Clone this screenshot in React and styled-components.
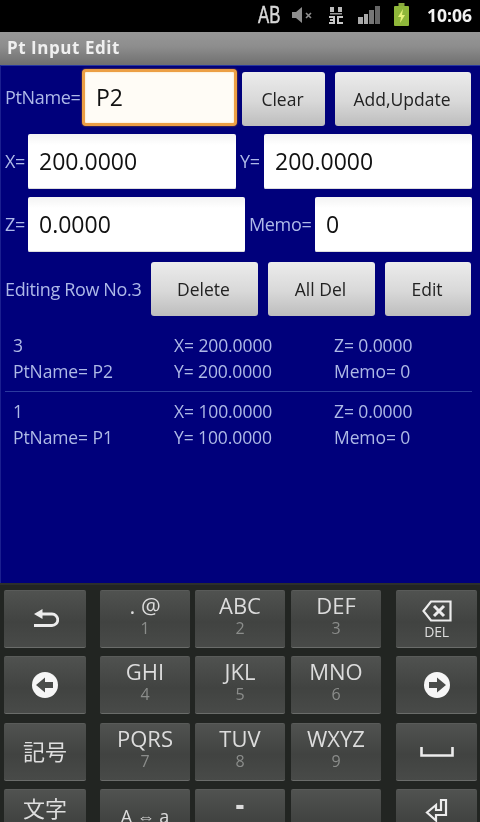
import React from "react";
import styled, { createGlobalStyle } from "styled-components";

const Global = createGlobalStyle`
  html, body { margin: 0; padding: 0; background: #000; }
  * { box-sizing: border-box; }
`;
const Screen = styled.div`
  width: 480px; height: 822px; overflow: hidden; display: flex; flex-direction: column;
  font-family: "Open Sans", "Noto Sans", sans-serif; background: #00007b; filter: blur(0.35px);
`;
const StatusBar = styled.div`
  height: 32px; flex: none; background: #000; display: flex; align-items: center; justify-content: flex-end;
  padding: 0 8px 2px 0;
`;
const StatusGroup = styled.div`
  display: flex; align-items: center; margin-right: ${p => p.$mr}px;
`;
const AB = styled.span`
  color: #d8d8d8; font: 400 24px "Liberation Sans", sans-serif; width: 22px; display: block;
  transform: scaleX(.7); transform-origin: left center; -webkit-text-stroke: .5px #d8d8d8;
`;
const Clock = styled.span`
  color: #f2f2f2; font: 700 17.500px "Open Sans", sans-serif;
`;
const TitleBar = styled.div`
  height: 33px; flex: none; padding: 5px 0 0 7px; color: #efefef; font-size: 17px; font-weight: 700; line-height: 22px;
  background: linear-gradient(#979797, #8d8d8d 45%, #6f6f6f); letter-spacing: .55px;
`;
const Body = styled.div`
  height: 518px; flex: none; background: #00007b; border-top: 1px solid #2636a0; border-left: 1px solid #1b1f8f;
  padding: 3px 8px 0 4px; display: flex; flex-direction: column;
`;
const FormRow = styled.div`
  display: flex; align-items: center; height: ${p => p.$h}px; margin-bottom: ${p => p.$mb || 0}px;
`;
const Label = styled.span`
  color: #aeb9e8; font-size: 18px; white-space: nowrap; width: ${p => p.$w}px; flex: none;
  letter-spacing: -.35px;
`;
const Field = styled.div`
  width: ${p => p.$w}px; height: ${p => p.$focus ? 57 : 55}px; flex: none; background: linear-gradient(#f3f3f3, #fff 20%); color: #111; font-size: 23px;
  display: flex; align-items: center; padding-left: 11px; border-radius: 2px; margin-right: ${p => p.$mr || 0}px;
  box-shadow: inset 0 -1px 0 #ddd;
  ${p => p.$focus && `border: 3px solid #ec9f45; box-shadow: 0 0 2px #a8651a, inset 0 0 2px #f8d9a8; border-radius: 4px; background:#fffcf6;`}
`;
const Btn = styled.div`
  width: ${p => p.$w}px; height: 54px; flex: none; margin-left: ${p => p.$ml || 0}px; margin-top: ${p => p.$mt || 0}px; color: #222; font-size: 17.500px;
  display: flex; align-items: center; justify-content: center; border-radius: 3px; padding-right: 2px;
  background: linear-gradient(#ececec, #d8d8d8 55%, #bdbdbd);
`;
const List = styled.div`
  margin: 16px -4px 0 -4px; display: flex; flex-direction: column;
`;
const ListRow = styled.div`
  display: grid; grid-template-columns: 161px 160px 1fr; padding: 0 0 0 12px; height: 67px;
  color: #aeb9e6; font-size: 17.500px; line-height: 25.500px; letter-spacing: -.1px;
  ${p => p.$line && `border-bottom: 1px solid #2c3a9e; height: 59px; margin-bottom: 7px; margin-left: 4px; padding-left: 8px; margin-right: 4px;`}
`;
const Cell = styled.div`white-space: nowrap;`;
const Keyboard = styled.div`
  flex: 1; border-top: 2px solid #2c2f2c; background: #222522;
  display: grid; grid-template-columns: 96px 95px 96px 105px 81px;
  grid-auto-rows: 58px; row-gap: 8.400px; padding: 5px 0 0 4px;
  & > :nth-child(5n+1) { margin-right: 14px; }
  & > :nth-child(5n+2) { margin-right: 5px; }
  & > :nth-child(5n+3) { margin-right: 6px; }
  & > :nth-child(5n+4) { margin-right: 15px; }
`;
const Key = styled.div`
  height: 58px; border-radius: 2px; background: linear-gradient(#505250, #414341 55%, #484a48);
  border-bottom: 1px solid #6a6c6a; border-top: 1px solid #595b59; color: #e2e2e2;
  display: flex; flex-direction: column; align-items: center; justify-content: ${p => p.$top ? "flex-start" : "center"};
  padding-top: ${p => p.$pt || 0}px;
`;
const KeyMain = styled.span`
  font-size: ${p => p.$s || 22}px; line-height: 25px; margin-top: ${p => p.$mt ?? 2}px; color: #dcdcdc;
  font-weight: ${p => p.$b ? 800 : 400};
`;
const KeySub = styled.span`font-size: 16px; line-height: 20px; color: #8b8d8b;`;
const CJK = styled.span`
  font: 22px/26px "Noto Sans CJK JP", sans-serif; color: #dedede; margin-top: ${p => p.$mt || 0}px;
`;
const Del = styled.span`font-size: 14px; line-height: 15px; color: #ddd; margin-top: 2px; letter-spacing: -.3px;`;

const Mute = () => (
  <svg width="22" height="20" viewBox="0 0 22 20">
    <path d="M1 7h4l6-5v16l-6-5H1z" fill="#8d8d8d" />
    <path d="M15 8l5 5M20 8l-5 5" stroke="#8d8d8d" strokeWidth="1.600" />
  </svg>
);
const Net = () => (
  <svg width="14" height="20" viewBox="0 0 14 20">
    <path d="M1 2h4v5H1zM9 2h4v5H9z" fill="#bbb" />
    <rect x="1" y="8" width="12" height="1.500" fill="#999" />
    <path d="M0 11h6v8H0v-2h4v-1H1v-2h3v-1H0zM8 11h6v2h-4v4h4v2H8z" fill="#c8c8c8" />
  </svg>
);
const Signal = () => (
  <svg width="22" height="20" viewBox="0 0 22 20">
    <rect x="0" y="12" width="5" height="7" fill="#aaa" />
    <rect x="6" y="9" width="4" height="10" fill="#aaa" />
    <rect x="11" y="5" width="5" height="14" fill="#777" />
    <rect x="17" y="1" width="5" height="18" fill="#666" />
  </svg>
);
const Battery = () => (
  <svg width="15" height="24" viewBox="0 0 15 24">
    <rect x="4.500" y="0" width="6" height="3" fill="#88a83c" />
    <rect x="0" y="3" width="15" height="20" rx="1" fill="#8fb73a" />
    <path d="M9 6L4 14h3l-1 6 5-8H8z" fill="#e6f27a" />
  </svg>
);
const BackIcon = () => (
  <svg width="28" height="22" viewBox="0 0 28 22">
    <path d="M11 6h10a5.500 5.500 0 0 1 0 11.500H3" fill="none" stroke="#ececec" strokeWidth="2.800" />
    <path d="M11.500 1L3 6l8.500 5z" fill="#ececec" />
  </svg>
);
const ArrowDisc = ({ right }) => (
  <svg width="28" height="28" viewBox="0 0 28 28">
    <circle cx="14" cy="14" r="13" fill="#f6f6f6" />
    <path d={right ? "M6 11h8V6.500L23 14l-9 7.500V17H6z" : "M22 11h-8V6.500L5 14l9 7.500V17h8z"} fill="#4a4c4a" />
  </svg>
);
const BackspaceIcon = () => (
  <svg width="30" height="22" viewBox="0 0 30 22">
    <path d="M9 1.500h19.500v19H9L1.500 11z" fill="none" stroke="#ececec" strokeWidth="2.200" />
    <path d="M12 6l10 10M22 6L12 16" stroke="#ececec" strokeWidth="3" />
  </svg>
);
const SpaceIcon = () => (
  <svg width="34" height="12" viewBox="0 0 34 12">
    <path d="M1.500 1v8.500h31V1" fill="none" stroke="#ececec" strokeWidth="2.600" />
  </svg>
);
const EnterIcon = () => (
  <svg width="24" height="26" viewBox="0 0 24 26">
    <path d="M16 2h5v15H11v5.500L2 14.500l9-7.500v5h5z" fill="none" stroke="#ececec" strokeWidth="2.200" />
  </svg>
);

const points = [
  { no: 3, name: "P2", x: "200.0000", y: "200.0000" },
  { no: 1, name: "P1", x: "100.0000", y: "100.0000" },
];
const letters = [
  ["back"], [". @", "1"], ["ABC", "2"], ["DEF", "3"], ["del"],
  ["left"], ["GHI", "4"], ["JKL", "5"], ["MNO", "6"], ["right"],
  ["kigo"], ["PQRS", "7"], ["TUV", "8"], ["WXYZ", "9"], ["space"],
  ["moji"], ["aa"], ["dash"], ["blank"], ["enter"],
];

const bottomRow = { moji: 4, aa: 0, dash: 0, blank: 0, enter: 8 };

const keyContent = ([m, s]) => {
  switch (m) {
    case "back": return <BackIcon />;
    case "del": return <><BackspaceIcon /><Del>DEL</Del></>;
    case "left": return <ArrowDisc />;
    case "right": return <ArrowDisc right />;
    case "kigo": return <CJK $mt={-3}>記号</CJK>;
    case "moji": return <CJK>文字</CJK>;
    case "space": return <SpaceIcon />;
    case "enter": return <EnterIcon />;
    case "aa": return <KeyMain $s={18} $mt={14}>A ⇔ a</KeyMain>;
    case "dash": return <KeyMain $s={26} $mt={2} $b>-</KeyMain>;
    case "blank": return null;
    default: return <><KeyMain>{m}</KeyMain><KeySub>{s}</KeySub></>;
  }
};

export default function App() {
  return (
    <Screen>
      <Global />
      <StatusBar>
        <StatusGroup $mr={11}><AB>AB</AB></StatusGroup>
        <StatusGroup $mr={16}><Mute /></StatusGroup>
        <StatusGroup $mr={15}><Net /></StatusGroup>
        <StatusGroup $mr={14}><Signal /></StatusGroup>
        <StatusGroup $mr={18}><Battery /></StatusGroup>
        <Clock>10:06</Clock>
      </StatusBar>
      <TitleBar>Pt Input Edit</TitleBar>
      <Body>
        <FormRow $h={56} $mb={8}>
          <Label $w={77}>PtName=</Label>
          <Field $w={155} $focus $mr={5}>P2</Field>
          <Btn $w={83} $mt={4}>Clear</Btn>
          <Btn $w={136} $ml={10} $mt={4}>Add,Update</Btn>
        </FormRow>
        <FormRow $h={56} $mb={7}>
          <Label $w={23}>X=</Label>
          <Field $w={208} $mr={4}>200.0000</Field>
          <Label $w={24}>Y=</Label>
          <Field $w={208}>200.0000</Field>
        </FormRow>
        <FormRow $h={56} $mb={9}>
          <Label $w={23}>Z=</Label>
          <Field $w={217} $mr={4}>0.0000</Field>
          <Label $w={66}>Memo=</Label>
          <Field $w={157}>0</Field>
        </FormRow>
        <FormRow $h={56}>
          <Label $w={146}>Editing Row No.3</Label>
          <Btn $w={107}>Delete</Btn>
          <Btn $w={107} $ml={10}>All Del</Btn>
          <Btn $w={86} $ml={10}>Edit</Btn>
        </FormRow>
        <List>
          {points.map((p, i) => (
            <ListRow key={p.no} $line={i === 0}>
              <Cell>{p.no}<br />PtName= {p.name}</Cell>
              <Cell>X= {p.x}<br />Y= {p.y}</Cell>
              <Cell>Z= 0.0000<br />Memo= 0</Cell>
            </ListRow>
          ))}
        </List>
      </Body>
      <Keyboard>
        {letters.map((k, i) => (
          <Key
            key={i}
            $top={k[1] !== undefined || k[0] in bottomRow}
            $pt={bottomRow[k[0]] || 0}
          >
            {keyContent(k)}
          </Key>
        ))}
      </Keyboard>
    </Screen>
  );
}
